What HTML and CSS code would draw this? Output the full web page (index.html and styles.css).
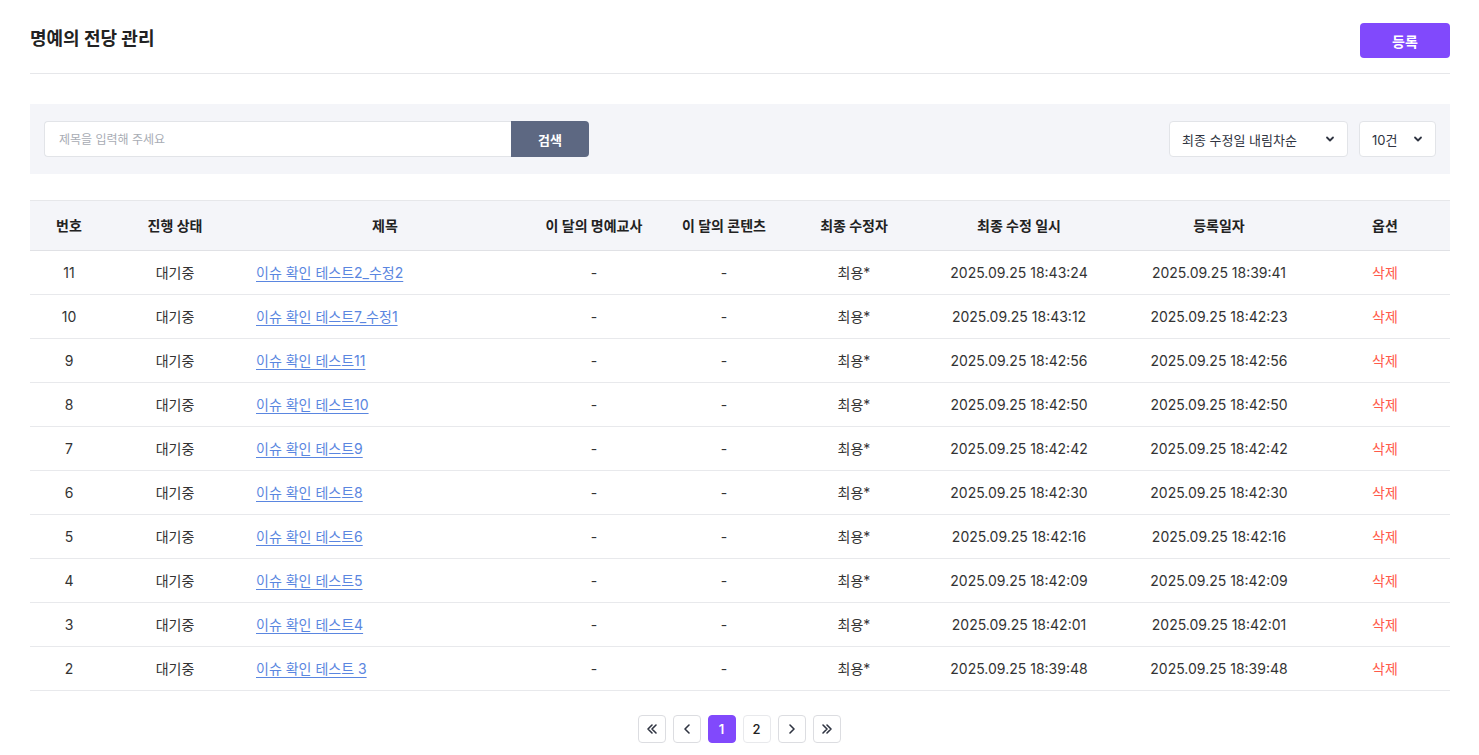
FILE: index.html
```html
<!DOCTYPE html>
<html lang="ko">
<head>
    <meta charset="UTF-8">
    <meta name="viewport" content="width=device-width, initial-scale=1.0">
    <title>명예의 전당 관리</title>
    <link rel="stylesheet" href="styles.css">
</head>
<body>
    <div id="page">
        <div class="page-head">
            <h1>명예의 전당 관리</h1>
            <button class="btn-primary">등록</button>
        </div>

        <div class="search-bar">
            <div class="search-box">
                <input type="text" placeholder="제목을 입력해 주세요">
                <button class="btn-search">검색</button>
            </div>
            <div class="filters">
                <div class="select sort">
                    <span>최종 수정일 내림차순</span>
                    <svg width="10" height="10" viewBox="0 0 10 10"><path d="M2 3.5l3 3 3-3" fill="none" stroke="#2f3441" stroke-width="1.8" stroke-linecap="round" stroke-linejoin="round"/></svg>
                </div>
                <div class="select size">
                    <span>10건</span>
                    <svg width="10" height="10" viewBox="0 0 10 10"><path d="M2 3.5l3 3 3-3" fill="none" stroke="#2f3441" stroke-width="1.8" stroke-linecap="round" stroke-linejoin="round"/></svg>
                </div>
            </div>
        </div>

        <table class="list">
            <colgroup>
                <col style="width:78px">
                <col style="width:134px">
                <col style="width:286px">
                <col style="width:132px">
                <col style="width:128px">
                <col style="width:132px">
                <col style="width:198px">
                <col style="width:202px">
                <col style="width:130px">
            </colgroup>
            <thead>
                <tr>
                    <th>번호</th>
                    <th>진행 상태</th>
                    <th>제목</th>
                    <th>이 달의 명예교사</th>
                    <th>이 달의 콘텐츠</th>
                    <th>최종 수정자</th>
                    <th>최종 수정 일시</th>
                    <th>등록일자</th>
                    <th>옵션</th>
                </tr>
            </thead>
            <tbody>
                <tr><td>11</td><td>대기중</td><td class="title"><a href="#">이슈 확인 테스트2_수정2</a></td><td>-</td><td>-</td><td>최용*</td><td>2025.09.25 18:43:24</td><td>2025.09.25 18:39:41</td><td><a class="del" href="#">삭제</a></td></tr>
                <tr><td>10</td><td>대기중</td><td class="title"><a href="#">이슈 확인 테스트7_수정1</a></td><td>-</td><td>-</td><td>최용*</td><td>2025.09.25 18:43:12</td><td>2025.09.25 18:42:23</td><td><a class="del" href="#">삭제</a></td></tr>
                <tr><td>9</td><td>대기중</td><td class="title"><a href="#">이슈 확인 테스트11</a></td><td>-</td><td>-</td><td>최용*</td><td>2025.09.25 18:42:56</td><td>2025.09.25 18:42:56</td><td><a class="del" href="#">삭제</a></td></tr>
                <tr><td>8</td><td>대기중</td><td class="title"><a href="#">이슈 확인 테스트10</a></td><td>-</td><td>-</td><td>최용*</td><td>2025.09.25 18:42:50</td><td>2025.09.25 18:42:50</td><td><a class="del" href="#">삭제</a></td></tr>
                <tr><td>7</td><td>대기중</td><td class="title"><a href="#">이슈 확인 테스트9</a></td><td>-</td><td>-</td><td>최용*</td><td>2025.09.25 18:42:42</td><td>2025.09.25 18:42:42</td><td><a class="del" href="#">삭제</a></td></tr>
                <tr><td>6</td><td>대기중</td><td class="title"><a href="#">이슈 확인 테스트8</a></td><td>-</td><td>-</td><td>최용*</td><td>2025.09.25 18:42:30</td><td>2025.09.25 18:42:30</td><td><a class="del" href="#">삭제</a></td></tr>
                <tr><td>5</td><td>대기중</td><td class="title"><a href="#">이슈 확인 테스트6</a></td><td>-</td><td>-</td><td>최용*</td><td>2025.09.25 18:42:16</td><td>2025.09.25 18:42:16</td><td><a class="del" href="#">삭제</a></td></tr>
                <tr><td>4</td><td>대기중</td><td class="title"><a href="#">이슈 확인 테스트5</a></td><td>-</td><td>-</td><td>최용*</td><td>2025.09.25 18:42:09</td><td>2025.09.25 18:42:09</td><td><a class="del" href="#">삭제</a></td></tr>
                <tr><td>3</td><td>대기중</td><td class="title"><a href="#">이슈 확인 테스트4</a></td><td>-</td><td>-</td><td>최용*</td><td>2025.09.25 18:42:01</td><td>2025.09.25 18:42:01</td><td><a class="del" href="#">삭제</a></td></tr>
                <tr><td>2</td><td>대기중</td><td class="title"><a href="#">이슈 확인 테스트 3</a></td><td>-</td><td>-</td><td>최용*</td><td>2025.09.25 18:39:48</td><td>2025.09.25 18:39:48</td><td><a class="del" href="#">삭제</a></td></tr>
            </tbody>
        </table>

        <div class="pager">
            <button class="page-btn"><svg width="14" height="14" viewBox="0 0 14 14"><path d="M7 3L3 7l4 4M11 3L7 7l4 4" fill="none" stroke="#2f3441" stroke-width="1.6" stroke-linecap="round" stroke-linejoin="round"/></svg></button>
            <button class="page-btn"><svg width="14" height="14" viewBox="0 0 14 14"><path d="M9 3L5 7l4 4" fill="none" stroke="#2f3441" stroke-width="1.6" stroke-linecap="round" stroke-linejoin="round"/></svg></button>
            <button class="page-btn active">1</button>
            <button class="page-btn num">2</button>
            <button class="page-btn"><svg width="14" height="14" viewBox="0 0 14 14"><path d="M5 3l4 4-4 4" fill="none" stroke="#2f3441" stroke-width="1.6" stroke-linecap="round" stroke-linejoin="round"/></svg></button>
            <button class="page-btn"><svg width="14" height="14" viewBox="0 0 14 14"><path d="M3 3l4 4-4 4M7 3l4 4-4 4" fill="none" stroke="#2f3441" stroke-width="1.6" stroke-linecap="round" stroke-linejoin="round"/></svg></button>
        </div>
    </div>
</body>
</html>
```

FILE: styles.css
```css
body {
    font-family: Inter, "Noto Sans CJK KR", sans-serif;
    margin: 0;
    padding: 0;
    background-color: #fff;
    color: #333;
}
#page {
    padding: 23px 29px 0 30px;
}
.page-head {
    display: flex;
    justify-content: space-between;
    align-items: center;
    padding-bottom: 15px;
    border-bottom: 1px solid #e6e7ea;
}
h1 {
    margin: 0;
    font-size: 18px;
    line-height: 22px;
    font-weight: 700;
    color: #222;
    padding-bottom: 3px;
}
.btn-primary {
    width: 90px;
    height: 35px;
    border: none;
    border-radius: 4px;
    background-color: #8149fc;
    color: #fff;
    font-family: inherit;
    font-size: 14px;
    font-weight: 600;
    cursor: pointer;
}
.search-bar {
    margin-top: 30px;
    height: 70px;
    background-color: #f4f5f9;
    display: flex;
    justify-content: space-between;
    align-items: center;
    padding: 0 14px;
}
.search-box {
    display: flex;
    height: 36px;
}
.search-box input {
    width: 467px;
    height: 36px;
    box-sizing: border-box;
    border: 1px solid #e2e4e8;
    border-right: none;
    border-radius: 4px 0 0 4px;
    padding: 0 14px;
    font-family: inherit;
    font-size: 12px;
    outline: none;
}
.search-box input::placeholder {
    color: #a8acb4;
}
.btn-search {
    width: 78px;
    height: 36px;
    border: none;
    border-radius: 0 4px 4px 0;
    background-color: #5d6882;
    color: #fff;
    font-family: inherit;
    font-size: 13px;
    font-weight: 700;
}
.filters {
    display: flex;
    gap: 11px;
}
.select {
    height: 36px;
    box-sizing: border-box;
    background-color: #fff;
    border: 1px solid #e2e4e8;
    border-radius: 4px;
    display: flex;
    align-items: center;
    justify-content: space-between;
    padding: 0 12px;
    font-size: 13px;
    color: #2f3441;
}
.select.sort {
    width: 179px;
}
.select.size {
    width: 77px;
}
.list {
    width: 100%;
    margin-top: 26px;
    border-collapse: collapse;
    table-layout: fixed;
    font-size: 14px;
    line-height: 20px;
}
.list th {
    height: 49px;
    padding: 0;
    background-color: #f4f5f9;
    border-top: 1px solid #e6e7ea;
    border-bottom: 1px solid #e0e1e5;
    font-weight: 700;
    color: #222;
    text-align: center;
}
.list td {
    height: 43px;
    padding: 0;
    border-bottom: 1px solid #e8e9ec;
    text-align: center;
    color: #333;
}
.list td.title {
    text-align: left;
    padding-left: 14px;
}
.list td.title a {
    color: #5a86e0;
    text-decoration: underline;
    text-underline-offset: 3px;
}
.del {
    color: #ff5a4a;
    text-decoration: none;
}
.pager {
    display: flex;
    justify-content: center;
    gap: 7px;
    margin-top: 24px;
    padding-right: 2px;
}
.page-btn {
    width: 28px;
    height: 28px;
    box-sizing: border-box;
    padding: 0;
    border: 1px solid #dcdde1;
    border-radius: 4px;
    background-color: #fff;
    font-family: inherit;
    font-size: 13px;
    font-weight: 600;
    color: #222;
    display: flex;
    align-items: center;
    justify-content: center;
}
.page-btn.num {
    font-weight: 500;
    border-color: #e8e9ec;
}
.page-btn.active {
    background-color: #8149fc;
    border-color: #8149fc;
    color: #fff;
}
```
